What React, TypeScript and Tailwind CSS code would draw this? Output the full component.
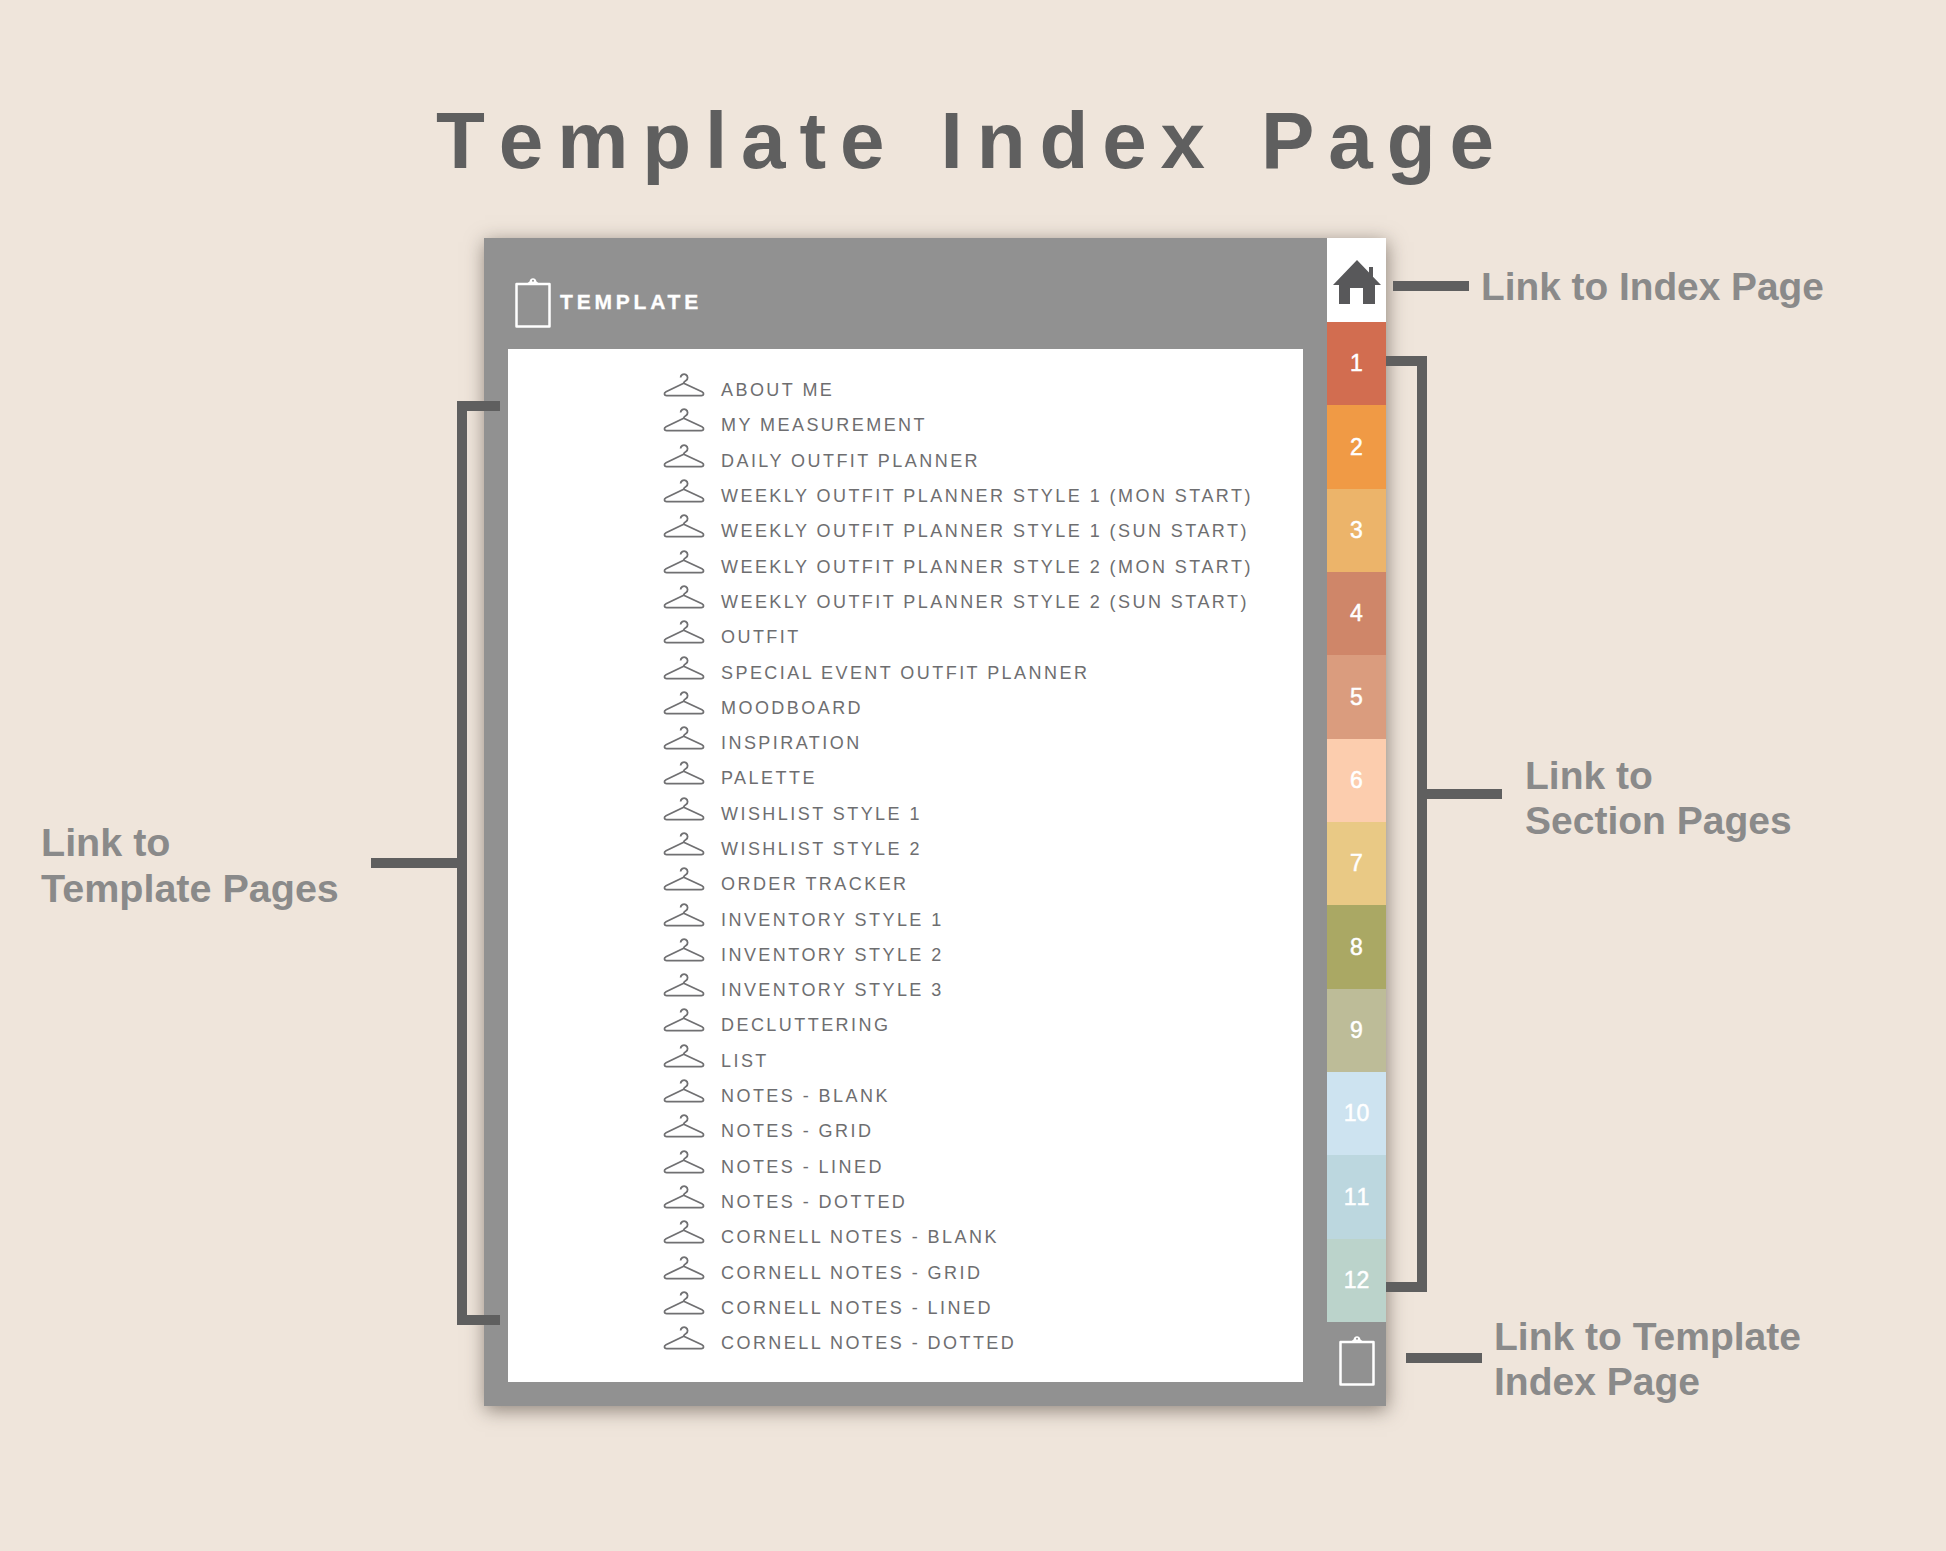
const pages = [
  'ABOUT ME',
  'MY MEASUREMENT',
  'DAILY OUTFIT PLANNER',
  'WEEKLY OUTFIT PLANNER STYLE 1 (MON START)',
  'WEEKLY OUTFIT PLANNER STYLE 1 (SUN START)',
  'WEEKLY OUTFIT PLANNER STYLE 2 (MON START)',
  'WEEKLY OUTFIT PLANNER STYLE 2 (SUN START)',
  'OUTFIT',
  'SPECIAL EVENT OUTFIT PLANNER',
  'MOODBOARD',
  'INSPIRATION',
  'PALETTE',
  'WISHLIST STYLE 1',
  'WISHLIST STYLE 2',
  'ORDER TRACKER',
  'INVENTORY STYLE 1',
  'INVENTORY STYLE 2',
  'INVENTORY STYLE 3',
  'DECLUTTERING',
  'LIST',
  'NOTES - BLANK',
  'NOTES - GRID',
  'NOTES - LINED',
  'NOTES - DOTTED',
  'CORNELL NOTES - BLANK',
  'CORNELL NOTES - GRID',
  'CORNELL NOTES - LINED',
  'CORNELL NOTES - DOTTED',
];

const tabs = [
  { label: '1', color: 'bg-[#d26d50]' },
  { label: '2', color: 'bg-[#f09a45]' },
  { label: '3', color: 'bg-[#ecb46a]' },
  { label: '4', color: 'bg-[#cf8669]' },
  { label: '5', color: 'bg-[#da9c7e]' },
  { label: '6', color: 'bg-[#fccdae]' },
  { label: '7', color: 'bg-[#e9c985]' },
  { label: '8', color: 'bg-[#aaa864]' },
  { label: '9', color: 'bg-[#bdbc98]' },
  { label: '10', color: 'bg-[#cde3f0]' },
  { label: '11', color: 'bg-[#bcd7df]' },
  { label: '12', color: 'bg-[#bbd3cb]' },
];

function Hanger() {
  return (
    <svg width="42" height="23" viewBox="0 0 42 23" fill="none" stroke="#707072" strokeWidth="1.8" className="shrink-0 overflow-visible">
      <path d="M17.6 3.6a3.5 3.5 0 1 1 5.4 3c-1.5.9-2.3 1.4-2.3 2.6" />
      <path d="M20.7 9.2 3 17.7c-2.4 1.2-1.9 3.9.6 3.9h34.8c2.5 0 3-2.7.6-3.9L20.7 9.2Z" strokeLinejoin="round" />
    </svg>
  );
}

function Clipboard({ className }: { className: string }) {
  return (
    <svg viewBox="0 0 36 51" fill="none" className={className}>
      <path d="M1.5 7h33v42.5h-33Z" stroke="#ffffff" strokeWidth="2.5" strokeLinejoin="round" />
      <path d="M8 7.5c3-.5 5-1.5 6.5-3 .5-4.5 6.500-4.500 7 0 1.500 1.500 3.500 2.500 6.500 3Z" fill="#ffffff" />
      <circle cx="18" cy="3.800" r="1" fill="#919191" />
    </svg>
  );
}

function Line({ className }: { className: string }) {
  return <div className={`h-[10px] shrink-0 bg-[#5f5f5f] ${className}`} />;
}

export default function App() {
  return (
    <div className="h-[1551px] w-[1946px] overflow-hidden bg-[#efe5db] font-['Liberation_Sans',Arial,sans-serif]">
      <h1 className="h-[238px] pl-[436px] pt-[95px] text-[80px] leading-[92px] font-bold tracking-[13.9px] whitespace-nowrap text-[#5f5f5f] [font-kerning:none] [word-spacing:6px]">
        Template Index Page
      </h1>

      <div className="flex h-[1168px]">
        {/* left callout */}
        <div className="relative z-10 mr-[-16px] flex w-[500px] shrink-0 items-start pt-[163px] pl-[41px]">
          <div className="mt-[419px] w-[330px] shrink-0 text-[39.500px] leading-[45.500px] font-bold whitespace-nowrap text-[#8a8a8a]">
            Link to
            <br />
            Template Pages
          </div>
          <Line className="mt-[457px] w-[86px]" />
          <div className="h-[924px] w-[43px] shrink-0 border-y-[10px] border-l-[10px] border-[#5f5f5f]" />
        </div>

        {/* planner page */}
        <div className="flex h-[1168px] w-[902px] shrink-0 bg-[#919191] shadow-[1px_4px_18px_rgba(60,50,40,0.55)]">
          <div className="flex w-[843px] shrink-0 flex-col pl-[24px]">
            <div className="flex h-[111px] shrink-0 items-start gap-[9px] pt-[39px] pl-[7px]">
              <Clipboard className="h-[51px] w-[36px] shrink-0 overflow-visible" />
              <span className="mt-[13px] text-[21px] leading-[24px] font-bold tracking-[3.800px] text-white [-webkit-text-stroke:0.3px_white]">TEMPLATE</span>
            </div>
            <div className="flex h-[1033px] w-[795px] flex-col bg-white pt-[23px] pl-[155px]">
              {pages.map((page) => (
                <div key={page} className="flex h-[35.300px] shrink-0 items-center gap-[16px]">
                  <div className="mt-[-8px]">
                    <Hanger />
                  </div>
                  <span className="mt-[1px] text-[18px] leading-[22px] tracking-[2.450px] whitespace-nowrap text-[#6e6e70]">{page}</span>
                </div>
              ))}
            </div>
          </div>

          <div className="flex w-[59px] shrink-0 flex-col">
            <div className="flex h-[84px] shrink-0 items-center justify-center bg-white pt-[4px]">
              <svg width="48" height="44" viewBox="0 0 48 44" fill="#58585a">
                <path d="M24 0 36 12.500V7h4v9.700L48 25H42v19H30V28H17v16H6V25H0Z" />
              </svg>
            </div>
            {tabs.map((tab) => (
              <div
                key={tab.label}
                className={`flex h-[83.330px] shrink-0 items-center justify-center text-[23px] text-white [font-kerning:none] [-webkit-text-stroke:0.5px_white] ${tab.color}`}
              >
                {tab.label}
              </div>
            ))}
            <div className="flex flex-1 items-start justify-center pt-[13px]">
              <Clipboard className="h-[51px] w-[36px] overflow-visible" />
            </div>
          </div>
        </div>

        {/* right callouts */}
        <div className="flex flex-col">
          <div className="mt-[43px] flex h-[10px] items-center pl-[7px]">
            <Line className="w-[76px]" />
            <span className="ml-[12px] text-[38.800px] leading-[45px] font-bold whitespace-nowrap text-[#8a8a8a]">Link to Index Page</span>
          </div>
          <div className="mt-[65px] flex items-start">
            <div className="h-[936px] w-[41px] shrink-0 border-y-[10px] border-r-[10px] border-[#5f5f5f]" />
            <Line className="mt-[433px] w-[75px]" />
            <div className="mt-[397px] ml-[23px] text-[39px] leading-[45px] font-bold whitespace-nowrap text-[#8a8a8a]">
              Link to
              <br />
              Section Pages
            </div>
          </div>
          <div className="mt-[61px] flex items-start pl-[20px]">
            <Line className="w-[76px]" />
            <div className="mt-[-39px] ml-[12px] text-[39px] leading-[45px] font-bold whitespace-nowrap text-[#8a8a8a]">
              Link to Template
              <br />
              Index Page
            </div>
          </div>
        </div>
      </div>
    </div>
  );
}
